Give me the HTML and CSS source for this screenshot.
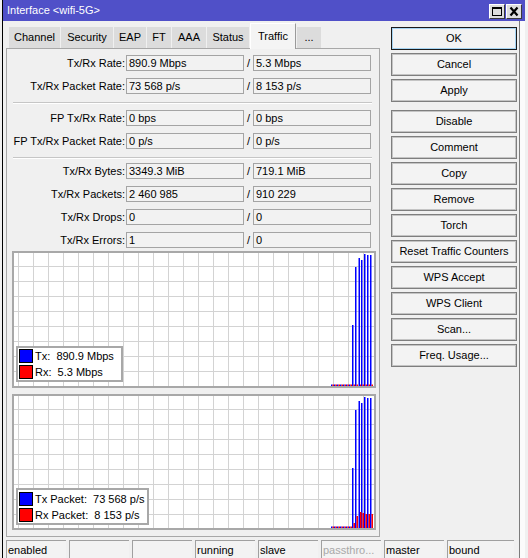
FILE: index.html
```html
<!DOCTYPE html>
<html>
<head>
<meta charset="utf-8">
<link rel="stylesheet" href="styles.css">
</head>
<body>
<div class="screen">
  <div class="window">
    <div class="titlebar">
      <span class="title">Interface &lt;wifi-5G&gt;</span>
      <div class="tbtns">
        <span class="tbtn"><svg width="12" height="11" viewBox="0 0 12 11"><rect x="1.5" y="1.5" width="9" height="8" fill="none" stroke="#000" stroke-width="1"/><rect x="1" y="1" width="10" height="2" fill="#000"/></svg></span>
        <span class="tbtn"><svg width="12" height="11" viewBox="0 0 12 11"><path d="M2.5 1.5 L9.5 9.5 M9.5 1.5 L2.5 9.5" stroke="#000" stroke-width="2.2" fill="none"/></svg></span>
      </div>
    </div>
    <div class="wbody">
      <div class="main">
        <div class="left">
          <div class="tabs">
            <div class="tab">Channel</div>
            <div class="tab">Security</div>
            <div class="tab">EAP</div>
            <div class="tab">FT</div>
            <div class="tab">AAA</div>
            <div class="tab">Status</div>
            <div class="tab active">Traffic</div>
            <div class="tab">...</div>
          </div>
          <div class="panel">
            <div class="group">
              <div class="row"><span class="lbl">Tx/Rx Rate:</span><span class="field">890.9 Mbps</span><span class="slash">/</span><span class="field">5.3 Mbps</span></div>
              <div class="row"><span class="lbl">Tx/Rx Packet Rate:</span><span class="field">73 568 p/s</span><span class="slash">/</span><span class="field">8 153 p/s</span></div>
            </div>
            <div class="sep sep1"></div>
            <div class="group">
              <div class="row"><span class="lbl">FP Tx/Rx Rate:</span><span class="field">0 bps</span><span class="slash">/</span><span class="field">0 bps</span></div>
              <div class="row"><span class="lbl">FP Tx/Rx Packet Rate:</span><span class="field">0 p/s</span><span class="slash">/</span><span class="field">0 p/s</span></div>
            </div>
            <div class="sep sep2"></div>
            <div class="group">
              <div class="row"><span class="lbl">Tx/Rx Bytes:</span><span class="field">3349.3 MiB</span><span class="slash">/</span><span class="field">719.1 MiB</span></div>
              <div class="row"><span class="lbl">Tx/Rx Packets:</span><span class="field">2 460 985</span><span class="slash">/</span><span class="field">910 229</span></div>
              <div class="row"><span class="lbl">Tx/Rx Drops:</span><span class="field">0</span><span class="slash">/</span><span class="field">0</span></div>
              <div class="row"><span class="lbl">Tx/Rx Errors:</span><span class="field">1</span><span class="slash">/</span><span class="field">0</span></div>
            </div>
            <div class="chart chart1">
              <svg class="plot" width="360" height="133" viewBox="0 0 360 133">
                <g fill="#0000ff">
                  <rect x="317" y="131.5" width="1.5" height="1.5"/><rect x="320" y="131.5" width="1.5" height="1.5"/><rect x="323" y="131.5" width="1.5" height="1.5"/><rect x="326" y="131.5" width="1.5" height="1.5"/><rect x="329" y="131.5" width="1.5" height="1.5"/><rect x="332" y="131.5" width="1.5" height="1.5"/><rect x="335" y="131.5" width="1.5" height="1.5"/>
                  <rect x="338" y="72" width="1.5" height="61"/><rect x="341" y="14" width="1.5" height="119"/><rect x="344.5" y="5" width="1.5" height="128"/><rect x="347" y="7" width="1.5" height="126"/><rect x="350" y="1" width="1.5" height="132"/><rect x="353" y="2" width="1.5" height="131"/><rect x="356" y="2" width="1.5" height="131"/>
                </g>
                <g fill="#ff0000">
                  <rect x="318.5" y="131.5" width="1.5" height="1.5"/><rect x="321.5" y="131.5" width="1.5" height="1.5"/><rect x="324.5" y="131.5" width="1.5" height="1.5"/><rect x="327.5" y="131.5" width="1.5" height="1.5"/><rect x="330.5" y="131.5" width="1.5" height="1.5"/><rect x="333.5" y="131.5" width="1.5" height="1.5"/><rect x="336.5" y="131.5" width="1.5" height="1.5"/>
                  <rect x="339.5" y="131.5" width="1.5" height="1.5"/><rect x="342.5" y="131.5" width="1.5" height="1.5"/><rect x="346" y="131.5" width="1" height="1.5"/><rect x="348.5" y="131.5" width="1.5" height="1.5"/><rect x="351.5" y="131.5" width="1.5" height="1.5"/><rect x="354.5" y="131.5" width="1.5" height="1.5"/><rect x="357.5" y="131.5" width="1.5" height="1.5"/>
                </g>
              </svg>
              <div class="legend legend1">
                <div class="lrow"><span class="sw blue"></span><span class="ltxt">Tx:  890.9 Mbps</span></div>
                <div class="lrow"><span class="sw red"></span><span class="ltxt">Rx:  5.3 Mbps</span></div>
              </div>
            </div>
            <div class="chart chart2">
              <svg class="plot" width="360" height="132" viewBox="0 0 360 132">
                <g fill="#0000ff">
                  <rect x="317" y="130.5" width="1.5" height="1.5"/><rect x="320" y="130.5" width="1.5" height="1.5"/><rect x="323" y="130.5" width="1.5" height="1.5"/><rect x="326" y="130.5" width="1.5" height="1.5"/><rect x="329" y="130.5" width="1.5" height="1.5"/><rect x="332" y="130.5" width="1.5" height="1.5"/><rect x="335" y="130.5" width="1.5" height="1.5"/>
                  <rect x="338" y="72" width="1.5" height="60"/><rect x="341" y="14" width="1.5" height="118"/><rect x="344.5" y="5" width="1.5" height="127"/><rect x="347" y="7" width="1.5" height="125"/><rect x="350" y="1" width="1.5" height="131"/><rect x="353" y="2" width="1.5" height="130"/><rect x="356" y="2" width="1.5" height="130"/>
                </g>
                <g fill="#ff0000">
                  <rect x="318.5" y="130.5" width="1.5" height="1.5"/><rect x="321.5" y="130.5" width="1.5" height="1.5"/><rect x="324.5" y="130.5" width="1.5" height="1.5"/><rect x="327.5" y="130.5" width="1.5" height="1.5"/><rect x="330.5" y="130.5" width="1.5" height="1.5"/><rect x="333.5" y="130.5" width="1.5" height="1.5"/><rect x="336.5" y="130.5" width="1.5" height="1.5"/>
                  <rect x="339.5" y="127" width="1.5" height="5"/><rect x="342.5" y="120" width="1.5" height="12"/><rect x="346" y="116" width="1.5" height="16"/><rect x="348.5" y="117" width="1.5" height="15"/><rect x="351.5" y="118" width="1.5" height="14"/><rect x="354.5" y="118" width="1.5" height="14"/><rect x="357.5" y="118" width="1.5" height="14"/>
                </g>
              </svg>
              <div class="legend legend2">
                <div class="lrow"><span class="sw blue"></span><span class="ltxt">Tx Packet:  73 568 p/s</span></div>
                <div class="lrow"><span class="sw red"></span><span class="ltxt">Rx Packet:  8 153 p/s</span></div>
              </div>
            </div>
          </div>
        </div>
        <div class="buttons">
          <div class="btn ok">OK</div>
          <div class="btn">Cancel</div>
          <div class="btn">Apply</div>
          <div class="btn gap">Disable</div>
          <div class="btn">Comment</div>
          <div class="btn">Copy</div>
          <div class="btn">Remove</div>
          <div class="btn">Torch</div>
          <div class="btn">Reset Traffic Counters</div>
          <div class="btn">WPS Accept</div>
          <div class="btn">WPS Client</div>
          <div class="btn">Scan...</div>
          <div class="btn">Freq. Usage...</div>
        </div>
      </div>
      <div class="statusbar">
        <div class="cell">enabled</div>
        <div class="cell"></div>
        <div class="cell"></div>
        <div class="cell">running</div>
        <div class="cell">slave</div>
        <div class="cell dim">passthro...</div>
        <div class="cell">master</div>
        <div class="cell">bound</div>
      </div>
    </div>
  </div>
</div>
</body>
</html>
```

FILE: styles.css
```css
html, body {
  margin: 0;
  padding: 0;
}
body {
  font-family: "Liberation Sans", Arial, sans-serif;
  font-size: 11px;
  color: #000;
  background: #f0f0f0;
  overflow: hidden;
}
.screen {
  width: 528px;
  height: 558px;
  display: flex;
  background: #f0f0f0;
}
.window {
  margin-left: 2px;
  border-left: 1px solid #000;
  width: 522px;
  height: 558px;
  background: #fbfbfb;
  display: flex;
  flex-direction: column;
}
.titlebar {
  height: 21px;
  background: #5050c8;
  display: flex;
  align-items: center;
  justify-content: space-between;
  padding: 0 3px 0 4px;
  box-sizing: border-box;
}
.title {
  color: #fff;
  font-size: 11px;
  line-height: 21px;
}
.tbtns {
  display: flex;
  gap: 1px;
  padding-top: 1px;
}
.tbtn {
  width: 16px;
  height: 15px;
  box-sizing: border-box;
  background: #dedede;
  border-top: 1px solid #ffffff;
  border-left: 1px solid #ffffff;
  border-right: 1px solid #3a3a3a;
  border-bottom: 1px solid #3a3a3a;
  display: flex;
  align-items: center;
  justify-content: center;
}
.wbody {
  width: 517px;
  height: 537px;
  box-sizing: border-box;
  background: #f0f0f0;
  border-right: 1px solid #7c7c7c;
  display: flex;
  flex-direction: column;
}
.main {
  display: flex;
  height: 516px;
}
.left {
  margin-left: 3px;
  width: 374px;
  display: flex;
  flex-direction: column;
}
.tabs {
  margin-top: 2px;
  height: 25px;
  padding-left: 3px;
  display: grid;
  grid-template-columns: 51px 52px 32px 24px 34px 42px 46px 24px;
  column-gap: 1px;
  align-items: end;
}
.tab {
  height: 21px;
  line-height: 21px;
  text-align: center;
  background: #dcdcdc;
  white-space: nowrap;
}
.tab.active {
  height: 26px;
  line-height: 25px;
  margin-bottom: -1px;
  background: #f4f4f4;
  border-left: 1px solid #ffffff;
  border-right: 1px solid #9a9a9a;
  border-top: 1px solid #ffffff;
  box-sizing: border-box;
  position: relative;
  z-index: 1;
}
.panel {
  height: 489px;
  box-sizing: border-box;
  border: 1px solid #a8a8a8;
  background: #f0f0f0;
  padding: 6px 0 6px 0;
}
.group {
  display: flex;
  flex-direction: column;
  gap: 7px;
}
.row {
  display: grid;
  grid-template-columns: 119px 118px 9px 118px;
  height: 16px;
  align-items: center;
}
.lbl {
  text-align: right;
  padding-right: 1px;
  white-space: nowrap;
}
.field {
  height: 16px;
  box-sizing: border-box;
  border: 1px solid #a4a4a4;
  padding-left: 2px;
  line-height: 14px;
  white-space: nowrap;
  background: #f2f2f2;
}
.slash {
  text-align: center;
}
.sep {
  margin-left: 6px;
  margin-right: 7px;
  border-top: 1px solid #c6c6c6;
  border-bottom: 1px solid #ffffff;
}
.sep1 {
  margin-top: 8px;
  margin-bottom: 6px;
}
.sep2 {
  margin-top: 8px;
  margin-bottom: 4px;
}
.chart {
  position: relative;
  margin-left: 5px;
  width: 364px;
  box-sizing: border-box;
  border: 2px solid #a8a8a8;
  background-color: #ffffff;
  background-image:
    linear-gradient(to right, #d3d3d3 1px, transparent 1px),
    linear-gradient(to bottom, #d3d3d3 1px, transparent 1px);
  background-size: 15px 15px;
  background-position: 4px 13px;
}
.chart1 {
  margin-top: 3px;
  height: 137px;
}
.chart2 {
  margin-top: 6px;
  height: 136px;
}
.plot {
  position: absolute;
  left: 0;
  top: 0;
  display: block;
}
.legend {
  position: absolute;
  left: 2px;
  box-sizing: border-box;
  border: 2px solid #a8a8a8;
  background: #ffffff;
  padding-left: 1px;
}
.legend1 {
  bottom: 4px;
  width: 107px;
  height: 36px;
}
.legend2 {
  bottom: 3px;
  width: 133px;
  height: 37px;
  padding-top: 1px;
}
.lrow {
  height: 16px;
  display: flex;
  align-items: center;
  gap: 2px;
}
.sw {
  width: 14px;
  height: 14px;
  box-sizing: border-box;
  border: 1px solid #000;
  flex: none;
}
.sw.blue { background: #0000ff; }
.sw.red { background: #ff0000; }
.ltxt {
  white-space: pre;
  line-height: 14px;
}
.buttons {
  margin-left: 11px;
  width: 126px;
  padding-top: 6px;
  display: flex;
  flex-direction: column;
  gap: 3px;
}
.btn {
  height: 23px;
  box-sizing: border-box;
  border: 1px solid #7e7e7e;
  box-shadow: inset 0 0 0 1px #c4c4c4;
  background: #f3f3f3;
  text-align: center;
  line-height: 21px;
  white-space: nowrap;
}
.btn.ok {
  border: 1px solid #1a1a1a;
  box-shadow: inset 0 0 0 1px #a6d4f2;
}
.btn.gap {
  margin-top: 5px;
}
.statusbar {
  margin-top: 3px;
  margin-left: 3px;
  display: grid;
  grid-template-columns: repeat(7, 60px) 67px;
  column-gap: 3px;
}
.cell {
  height: 20px;
  box-sizing: border-box;
  border-top: 1px solid #a0a0a0;
  border-left: 1px solid #a0a0a0;
  background: #f3f3f3;
  padding-left: 1px;
  line-height: 18px;
  white-space: nowrap;
  overflow: hidden;
}
.cell.dim {
  color: #a8a8a8;
}
```
